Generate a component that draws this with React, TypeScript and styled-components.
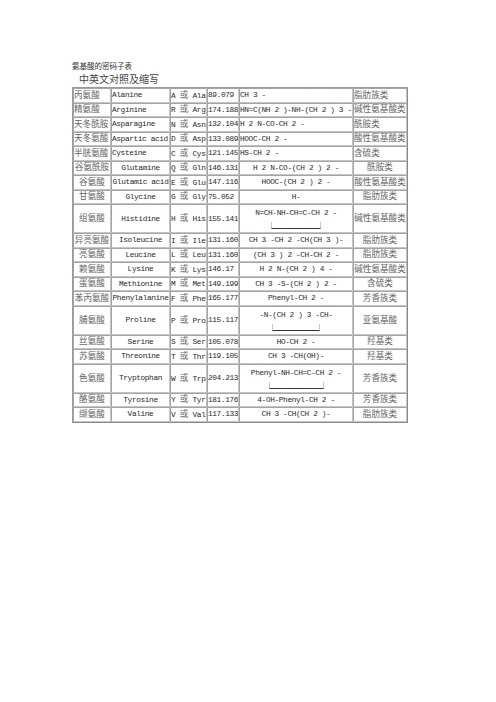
import React from "react";
import styled, { createGlobalStyle } from "styled-components";

const GlobalStyle = createGlobalStyle`
  html, body {
    margin: 0;
    padding: 0;
    background: #ffffff;
  }
  body {
    font-family: "Liberation Mono", "Noto Sans CJK SC", monospace;
  }
`;

const Page = styled.div`
  padding: 61px 0 0 72px;
  display: flex;
  flex-direction: column;
  align-items: flex-start;
`;

const Title = styled.div`
  font-family: "Noto Sans CJK SC", sans-serif;
  font-size: 7.5px;
  line-height: 10px;
  color: #333;
`;

const Subtitle = styled.div`
  font-family: "Noto Sans CJK SC", sans-serif;
  font-size: 10px;
  line-height: 12px;
  color: #444;
  margin: 2px 0 0 7px;
`;

const Table = styled.table`
  margin-top: 2px;
  width: 336px;
  table-layout: fixed;
  border-collapse: separate;
  border-spacing: 0;
  border: 1px solid #8a8a8a;
  border-top-color: #9a9a9a;
  border-left-color: #9a9a9a;
`;

const Col = styled.col<{ $w: number }>`
  width: ${(p) => p.$w}px;
`;

const Row = styled.tr<{ $tall?: boolean }>`
  height: ${(p) => (p.$tall ? 29 : 14.5)}px;
`;

const Cell = styled.td<{ $center?: boolean }>`
  box-sizing: border-box;
  padding: 0;
  border: 1px solid #a4a4a4;
  border-right-color: #c4c4c4;
  border-bottom-color: #c4c4c4;
  text-align: ${(p) => (p.$center ? "center" : "left")};
  vertical-align: middle;
  white-space: nowrap;
  overflow: hidden;
  font-family: "Liberation Mono", monospace;
  font-size: 7.8px;
  letter-spacing: -0.38px;
  line-height: 10px;
  color: #2a2a2a;
`;

const Han = styled.span`
  font-family: "Noto Sans CJK SC", sans-serif;
  font-size: 8.6px;
  line-height: 8px;
  letter-spacing: 0;
  color: #666;
`;

const Formula = styled.div`
  line-height: 11px;
`;

const RingBond = styled.span<{ $w: number }>`
  display: inline-block;
  width: ${(p) => p.$w}px;
  height: 6px;
  margin-top: 3px;
  border-left: 1px solid #c8c8c8;
  border-right: 1px solid #c8c8c8;
  border-bottom: 1px solid #333;
  vertical-align: top;
`;

type Acid = {
  cn: string;
  en: string;
  letter: string;
  abbr: string;
  mass: string;
  formula: string;
  ring?: number;
  cat: string;
};

const acids: Acid[] = [
  { cn: "丙氨酸", en: "Alanine", letter: "A", abbr: "Ala", mass: "89.079", formula: "CH 3 -", cat: "脂肪族类" },
  { cn: "精氨酸", en: "Arginine", letter: "R", abbr: "Arg", mass: "174.188", formula: "HN=C(NH 2 )-NH-(CH 2 ) 3 -", cat: "碱性氨基酸类" },
  { cn: "天冬酰胺", en: "Asparagine", letter: "N", abbr: "Asn", mass: "132.104", formula: "H 2 N-CO-CH 2 -", cat: "酰胺类" },
  { cn: "天冬氨酸", en: "Aspartic acid", letter: "D", abbr: "Asp", mass: "133.089", formula: "HOOC-CH 2 -", cat: "酸性氨基酸类" },
  { cn: "半胱氨酸", en: "Cysteine", letter: "C", abbr: "Cys", mass: "121.145", formula: "HS-CH 2 -", cat: "含硫类" },
  { cn: "谷氨酰胺", en: "Glutamine", letter: "Q", abbr: "Gln", mass: "146.131", formula: "H 2 N-CO-(CH 2 ) 2 -", cat: "酰胺类" },
  { cn: "谷氨酸", en: "Glutamic acid", letter: "E", abbr: "Glu", mass: "147.116", formula: "HOOC-(CH 2 ) 2 -", cat: "酸性氨基酸类" },
  { cn: "甘氨酸", en: "Glycine", letter: "G", abbr: "Gly", mass: "75.052", formula: "H-", cat: "脂肪族类" },
  { cn: "组氨酸", en: "Histidine", letter: "H", abbr: "His", mass: "155.141", formula: "N=CH-NH-CH=C-CH 2 -", ring: 48, cat: "碱性氨基酸类" },
  { cn: "异亮氨酸", en: "Isoleucine", letter: "I", abbr: "Ile", mass: "131.160", formula: "CH 3 -CH 2 -CH(CH 3 )-", cat: "脂肪族类" },
  { cn: "亮氨酸", en: "Leucine", letter: "L", abbr: "Leu", mass: "131.160", formula: "(CH 3 ) 2 -CH-CH 2 -", cat: "脂肪族类" },
  { cn: "赖氨酸", en: "Lysine", letter: "K", abbr: "Lys", mass: "146.17", formula: "H 2 N-(CH 2 ) 4 -", cat: "碱性氨基酸类" },
  { cn: "蛋氨酸", en: "Methionine", letter: "M", abbr: "Met", mass: "149.199", formula: "CH 3 -S-(CH 2 ) 2 -", cat: "含硫类" },
  { cn: "苯丙氨酸", en: "Phenylalanine", letter: "F", abbr: "Phe", mass: "165.177", formula: "Phenyl-CH 2 -", cat: "芳香族类" },
  { cn: "脯氨酸", en: "Proline", letter: "P", abbr: "Pro", mass: "115.117", formula: "-N-(CH 2 ) 3 -CH-", ring: 46, cat: "亚氨基酸" },
  { cn: "丝氨酸", en: "Serine", letter: "S", abbr: "Ser", mass: "105.078", formula: "HO-CH 2 -", cat: "羟基类" },
  { cn: "苏氨酸", en: "Threonine", letter: "T", abbr: "Thr", mass: "119.105", formula: "CH 3 -CH(OH)-", cat: "羟基类" },
  { cn: "色氨酸", en: "Tryptophan", letter: "W", abbr: "Trp", mass: "204.213", formula: "Phenyl-NH-CH=C-CH 2 -", ring: 53, cat: "芳香族类" },
  { cn: "酪氨酸", en: "Tyrosine", letter: "Y", abbr: "Tyr", mass: "181.176", formula: "4-OH-Phenyl-CH 2 -", cat: "芳香族类" },
  { cn: "缬氨酸", en: "Valine", letter: "V", abbr: "Val", mass: "117.133", formula: "CH 3 -CH(CH 2 )-", cat: "脂肪族类" },
];

const widths = [38, 59, 37, 32, 114, 54];

export default function App() {
  return (
    <>
      <GlobalStyle />
      <Page>
        <Title>氨基酸的密码子表</Title>
        <Subtitle>中英文对照及缩写</Subtitle>
        <Table>
          <colgroup>
            {widths.map((w, i) => (
              <Col key={i} $w={w} />
            ))}
          </colgroup>
          <tbody>
            {acids.map((a, i) => {
              const center = i >= 5;
              return (
                <Row key={a.en} $tall={!!a.ring}>
                  <Cell $center={center}>
                    <Han>{a.cn}</Han>
                  </Cell>
                  <Cell $center={center}>{a.en}</Cell>
                  <Cell>
                    {a.letter} <Han>或</Han> {a.abbr}
                  </Cell>
                  <Cell>{a.mass}</Cell>
                  <Cell $center={center}>
                    {a.ring ? (
                      <>
                        <Formula>{a.formula}</Formula>
                        <RingBond $w={a.ring} />
                      </>
                    ) : (
                      a.formula
                    )}
                  </Cell>
                  <Cell $center={center}>
                    <Han>{a.cat}</Han>
                  </Cell>
                </Row>
              );
            })}
          </tbody>
        </Table>
      </Page>
    </>
  );
}
